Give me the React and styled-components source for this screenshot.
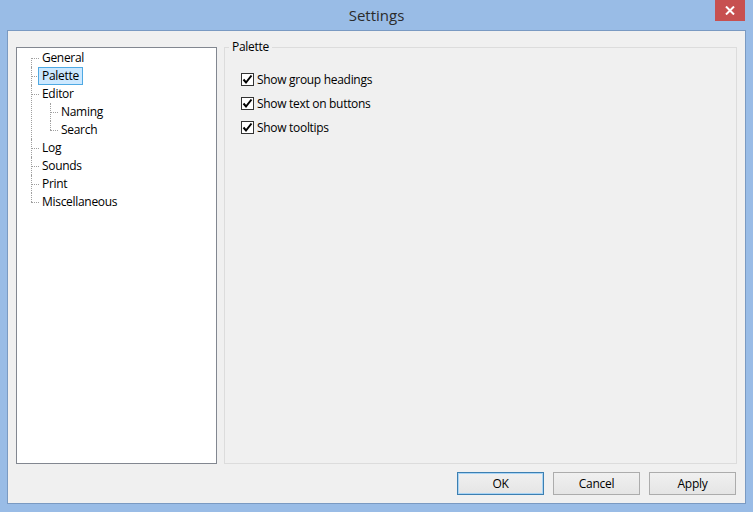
import React from "react";
import styled, { createGlobalStyle } from "styled-components";

const Global = createGlobalStyle`
  html, body { margin: 0; padding: 0; }
  body {
    width: 753px;
    height: 512px;
    overflow: hidden;
    font-family: "Open Sans", "Noto Sans", sans-serif;
    font-size: 12px;
    letter-spacing: -0.3px;
    color: #000;
  }
`;

const Window = styled.div`
  box-sizing: border-box;
  width: 753px;
  height: 512px;
  background: #99bce6;
  padding: 0 7px 8px 7px;
  display: flex;
  flex-direction: column;
`;

const TitleBar = styled.div`
  position: relative;
  height: 30px;
  display: flex;
  align-items: center;
  justify-content: center;
  font-size: 15px;
  letter-spacing: 0;
  color: #2b2b2b;
  flex-shrink: 0;
`;

const Close = styled.div`
  position: absolute;
  top: 0;
  right: 1px;
  width: 30px;
  height: 21px;
  background: #c75050;
  display: flex;
  align-items: center;
  justify-content: center;
`;

const Client = styled.div`
  flex: 1;
  border: 1px solid #7a9ac2;
  background: #f0f0f0;
  display: flex;
  flex-direction: column;
  padding: 15px 8px 8px 8px;
  min-height: 0;
`;

const Content = styled.div`
  flex: 1;
  display: flex;
  gap: 7px;
  min-height: 0;
`;

const TreeBox = styled.div`
  box-sizing: border-box;
  width: 201px;
  margin-top: 1px;
  background: #fff;
  border: 1px solid #828790;
  padding: 1px 0 0 14px;
`;

const TreeList = styled.ul`
  list-style: none;
  margin: 0;
  padding: 0;
  margin-left: ${(p) => (p.$nested ? "12px" : "0")};
`;

const TreeItem = styled.li`
  position: relative;
  padding-left: 7px;
  &::before {
    content: "";
    position: absolute;
    left: 0;
    top: 0;
    height: 100%;
    border-left: 1px dotted #a0a0a0;
  }
  &:last-child::before {
    height: 9px;
  }
  ${(p) =>
    p.$root &&
    `
    &:first-child::before { top: 9px; height: calc(100% - 9px); }
  `}
  &::after {
    content: "";
    position: absolute;
    left: 0;
    top: 9px;
    width: 8px;
    border-top: 1px dotted #a0a0a0;
  }
`;

const Label = styled.span`
  display: inline-block;
  box-sizing: border-box;
  height: 18px;
  line-height: 16px;
  padding: 0 3px;
  border: 1px solid ${(p) => (p.$selected ? "#4fa9e3" : "transparent")};
  background: ${(p) => (p.$selected ? "#cce8ff" : "transparent")};
  position: relative;
  z-index: 1;
`;

const Group = styled.fieldset`
  flex: 1;
  margin: -6px 0 0 0;
  padding: 0;
  border: 1px solid #dcdcdc;
  min-width: 0;
`;

const Legend = styled.legend`
  padding: 0 3px;
  margin-left: 4px;
  line-height: 14px;
`;

const Options = styled.div`
  padding: 13px 0 0 16px;
`;

const CheckRow = styled.label`
  display: flex;
  align-items: center;
  height: 24px;
  gap: 3px;
`;

const Box = styled.span`
  box-sizing: border-box;
  width: 13px;
  height: 13px;
  border: 1px solid #333;
  background: #fff;
  display: flex;
  align-items: center;
  justify-content: center;
`;

const Footer = styled.div`
  display: flex;
  justify-content: flex-end;
  gap: 9px;
  padding: 8px 1px 0 0;
`;

const Button = styled.button`
  box-sizing: border-box;
  width: 87px;
  height: 23px;
  font-family: inherit;
  font-size: 12px;
  letter-spacing: inherit;
  color: #000;
  background: linear-gradient(#f0f0f0, #e5e5e5);
  border: 1px solid ${(p) => (p.$default ? "#3c7fb1" : "#acacac")};
  box-shadow: ${(p) => (p.$default ? "inset 0 0 0 1px #a9d4f5" : "none")};
  padding: 0;
`;

const Check = () => (
  <svg width="11" height="11" viewBox="0 0 11 11">
    <path d="M1.5 5.5 L4 8.5 L9.5 1.5" fill="none" stroke="#000" strokeWidth="2" />
  </svg>
);

const Item = ({ children, selected, root, sub }) => (
  <TreeItem $root={root}>
    <Label $selected={selected}>{children}</Label>
    {sub}
  </TreeItem>
);

export default function App() {
  return (
    <>
      <Global />
      <Window>
        <TitleBar>
          Settings
          <Close>
            <svg width="10" height="9" viewBox="0 0 10 9">
              <path d="M1 0.5 L9 8.5 M9 0.5 L1 8.5" stroke="#fff" strokeWidth="2" />
            </svg>
          </Close>
        </TitleBar>
        <Client>
          <Content>
            <TreeBox>
              <TreeList>
                <Item root>General</Item>
                <Item root selected>Palette</Item>
                <Item
                  root
                  sub={
                    <TreeList $nested>
                      <Item>Naming</Item>
                      <Item>Search</Item>
                    </TreeList>
                  }
                >
                  Editor
                </Item>
                <Item root>Log</Item>
                <Item root>Sounds</Item>
                <Item root>Print</Item>
                <Item root>Miscellaneous</Item>
              </TreeList>
            </TreeBox>
            <Group>
              <Legend>Palette</Legend>
              <Options>
                <CheckRow><Box><Check /></Box>Show group headings</CheckRow>
                <CheckRow><Box><Check /></Box>Show text on buttons</CheckRow>
                <CheckRow><Box><Check /></Box>Show tooltips</CheckRow>
              </Options>
            </Group>
          </Content>
          <Footer>
            <Button $default>OK</Button>
            <Button>Cancel</Button>
            <Button>Apply</Button>
          </Footer>
        </Client>
      </Window>
    </>
  );
}
